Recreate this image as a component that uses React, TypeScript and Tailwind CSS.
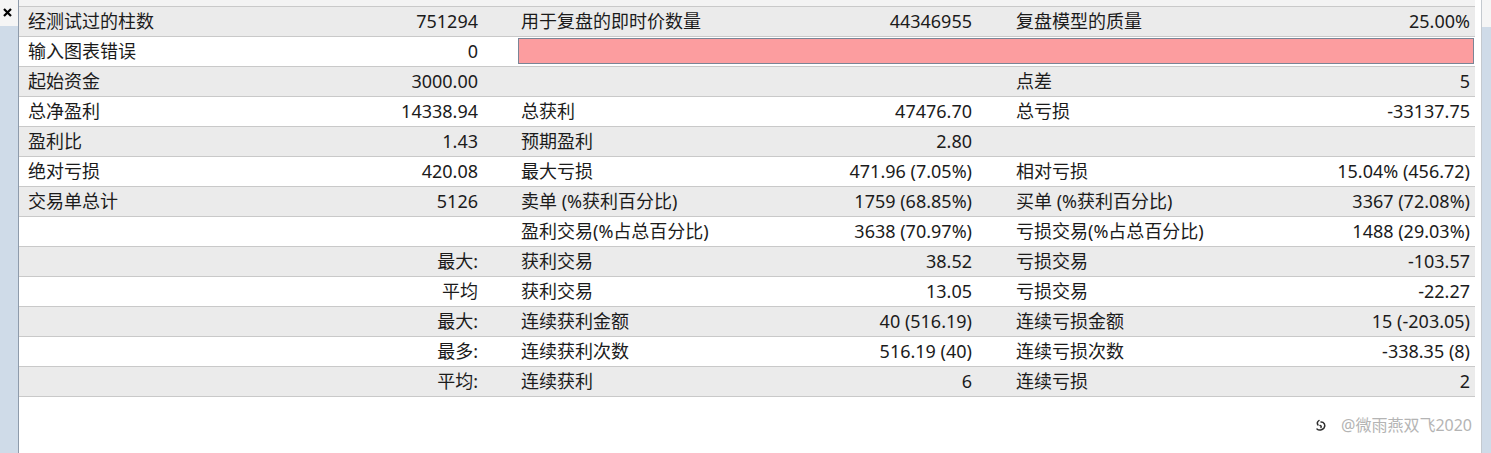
type Row = { cells: string[]; pink?: boolean };

// each row: [label1, value1, label2, value2, label3, value3]
const rows: Row[] = [
  { cells: ['经测试过的柱数', '751294', '用于复盘的即时价数量', '44346955', '复盘模型的质量', '25.00%'] },
  { cells: ['输入图表错误', '0', '', '', '', ''], pink: true },
  { cells: ['起始资金', '3000.00', '', '', '点差', '5'] },
  { cells: ['总净盈利', '14338.94', '总获利', '47476.70', '总亏损', '-33137.75'] },
  { cells: ['盈利比', '1.43', '预期盈利', '2.80', '', ''] },
  { cells: ['绝对亏损', '420.08', '最大亏损', '471.96 (7.05%)', '相对亏损', '15.04% (456.72)'] },
  { cells: ['交易单总计', '5126', '卖单 (%获利百分比)', '1759 (68.85%)', '买单 (%获利百分比)', '3367 (72.08%)'] },
  { cells: ['', '', '盈利交易(%占总百分比)', '3638 (70.97%)', '亏损交易(%占总百分比)', '1488 (29.03%)'] },
  { cells: ['', '最大:', '获利交易', '38.52', '亏损交易', '-103.57'] },
  { cells: ['', '平均', '获利交易', '13.05', '亏损交易', '-22.27'] },
  { cells: ['', '最大:', '连续获利金额', '40 (516.19)', '连续亏损金额', '15 (-203.05)'] },
  { cells: ['', '最多:', '连续获利次数', '516.19 (40)', '连续亏损次数', '-338.35 (8)'] },
  { cells: ['', '平均:', '连续获利', '6', '连续亏损', '2'] },
];

function ReportRow({ row, index }: { row: Row; index: number }) {
  const [l1, v1, l2, v2, l3, v3] = row.cells;
  const bg = index % 2 === 0 ? 'bg-[#ebebeb]' : 'bg-white';

  return (
    <div
      className={`grid grid-cols-[250px_244px_250px_245px_250px_217px] h-[30px] border-b border-[#c9c9c9] ${bg}`}
    >
      <div className="flex items-center pl-[9px]">{l1}</div>
      <div className="flex items-center justify-end pr-[35px]">{v1}</div>
      {row.pink ? (
        <div className="col-span-4 flex items-stretch pl-[5px] pr-[1px] pt-[1px] pb-[2px]">
          <div className="flex-1 bg-[#fc9d9f] border border-[#7a8596]" />
        </div>
      ) : (
        <>
          <div className="flex items-center pl-[8px] whitespace-nowrap">{l2}</div>
          <div className="flex items-center justify-end pr-[36px]">{v2}</div>
          <div className="flex items-center pl-[8px] whitespace-nowrap">{l3}</div>
          <div className="flex items-center justify-end pr-[5px]">{v3}</div>
        </>
      )}
    </div>
  );
}

function WeiboMark() {
  return (
    <svg className="w-[13px] h-[15px]" viewBox="0 0 13 15" fill="none" stroke="#2e2e2e" strokeWidth={1.5}>
      <path d="M5 2.5c-1.5 1-2 3-1 4.5" strokeLinecap="round" />
      <path d="M7 4c3 0 5 3 3 6c-1.5 2-5 3-7 1" strokeLinecap="round" />
      <path d="M6 7.5c1 0 1.5 1 1 2" strokeLinecap="round" />
    </svg>
  );
}

export default function App() {
  return (
    <div
      className="flex w-[1491px] h-[453px] bg-white text-[#1b1b1b] text-[18px] overflow-hidden"
      style={{ fontFamily: '"Noto Sans", "Noto Sans CJK SC", sans-serif' }}
    >
      {/* left dock strip */}
      <div className="w-[19px] flex flex-col border-r border-[#8e9bab]">
        <div className="h-[26px] bg-[#f5f5f5] flex items-start pl-[3px] pt-[8px]">
          <svg className="w-[9px] h-[9px]" viewBox="0 0 9 9" stroke="#000" strokeWidth={2.2}>
            <path d="M1 1l7 7M8 1l-7 7" />
          </svg>
        </div>
        <div className="flex-1 bg-[#cfdbe8]" />
      </div>

      {/* report table */}
      <div className="flex flex-col w-[1456px]">
        <div className="h-[7px] bg-[#f3f3f3] border-b border-[#c9c9c9]" />
        {rows.map((row, i) => (
          <ReportRow key={i} row={row} index={i} />
        ))}
        <div className="flex-1 flex justify-end items-start pt-[16px] pr-[3px]">
          <div className="flex items-center gap-[14px] text-[16px] text-[#b4b4b4]">
            <WeiboMark />
            <span>@微雨燕双飞2020</span>
          </div>
        </div>
      </div>

      {/* right strip */}
      <div className="w-[7px] bg-white border-r border-[#c4c9cf]" />
      <div className="flex-1 flex flex-col">
        <div className="h-[27px] bg-[#f5f5f5]" />
        <div className="flex-1 bg-[#cfdbe8]" />
      </div>
    </div>
  );
}
